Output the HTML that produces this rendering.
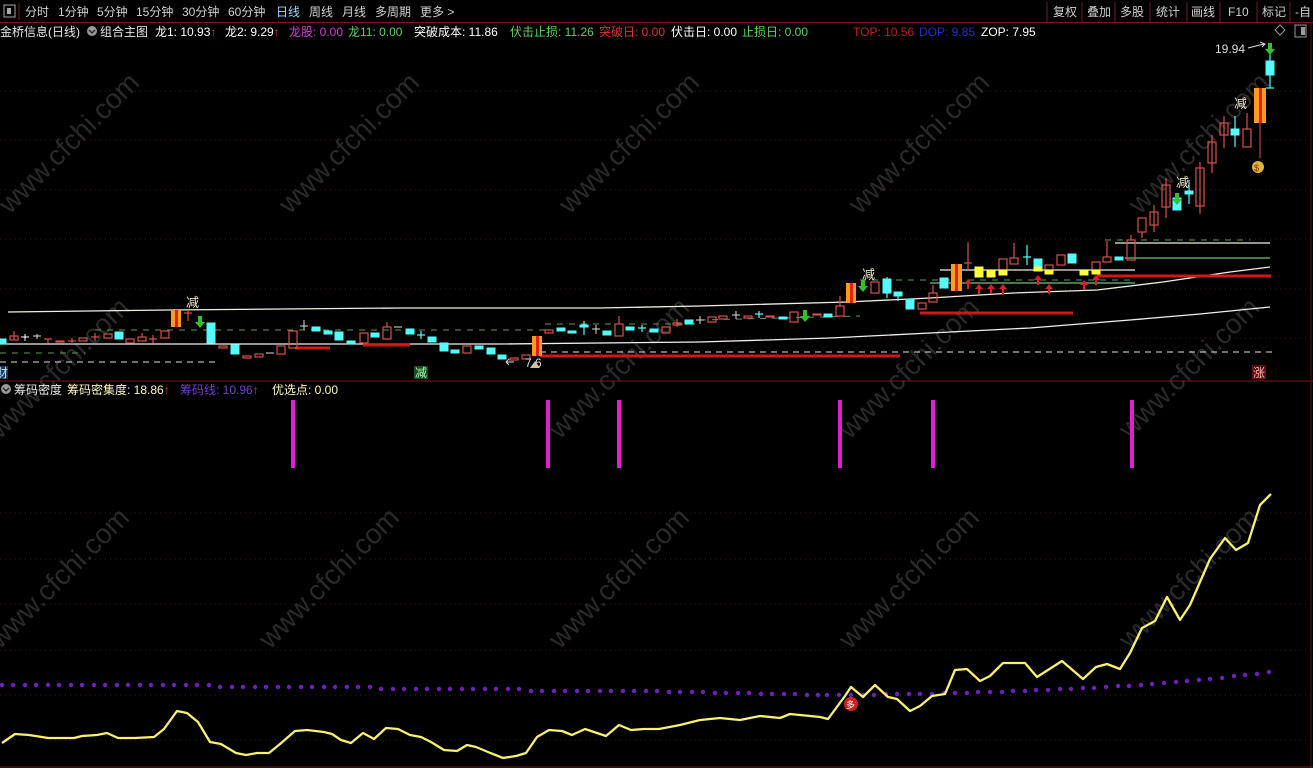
<!DOCTYPE html>
<html><head><meta charset="utf-8"><style>
html,body{margin:0;padding:0;background:#000;width:1313px;height:768px;overflow:hidden}
svg{display:block}
text{font-family:"Liberation Sans","Noto Sans CJK SC",sans-serif;font-size:12px}
.c{fill:#54fcfc;stroke:#54fcfc;stroke-width:1}
.r{fill:none;stroke:#d8504b;stroke-width:1.2}
.y{fill:#ffff40;stroke:#ffff40}
.w{stroke:#d8504b;stroke-width:1.2}
.wc{stroke:#54fcfc;stroke-width:1.2}
.g{stroke:#401818;stroke-width:1;stroke-dasharray:1 4}
</style></head><body>
<svg width="1313" height="768" viewBox="0 0 1313 768" xmlns="http://www.w3.org/2000/svg">
<rect width="1313" height="768" fill="#000"/>
<!-- top bar -->
<line x1="0" y1="22.5" x2="1313" y2="22.5" stroke="#7a1a1a"/>
<rect x="4" y="5" width="11" height="12" fill="none" stroke="#aaa"/><rect x="7" y="8" width="4" height="6" fill="#aaa"/>
<line x1="19" y1="3" x2="19" y2="20" stroke="#7a1a1a"/>
<g fill="#d0d0d0">
<text x="25" y="16">分时</text><text x="58" y="16">1分钟</text><text x="97" y="16">5分钟</text><text x="136" y="16">15分钟</text><text x="182" y="16">30分钟</text><text x="228" y="16">60分钟</text>
<text x="276" y="16" fill="#9fd8ff">日线</text><text x="309" y="16">周线</text><text x="342" y="16">月线</text><text x="375" y="16">多周期</text><text x="420" y="16">更多 &gt;</text>
<text x="1053" y="16">复权</text><text x="1087" y="16">叠加</text><text x="1120" y="16">多股</text><text x="1156" y="16">统计</text><text x="1191" y="16">画线</text><text x="1228" y="16">F10</text><text x="1262" y="16">标记</text><text x="1295" y="16">-自</text>
</g>
<g stroke="#6a2020"><line x1="1047" y1="2" x2="1047" y2="22"/><line x1="1082" y1="2" x2="1082" y2="22"/><line x1="1115" y1="2" x2="1115" y2="22"/><line x1="1150" y1="2" x2="1150" y2="22"/><line x1="1187" y1="2" x2="1187" y2="22"/><line x1="1220" y1="2" x2="1220" y2="22"/><line x1="1257" y1="2" x2="1257" y2="22"/><line x1="1290" y1="2" x2="1290" y2="22"/></g>
<!-- legend -->
<text x="0" y="36" fill="#e8e8e8">金桥信息(日线)</text>
<circle cx="92" cy="31" r="5" fill="#999"/><path d="M89 30l3 3 3-3" stroke="#222" fill="none" stroke-width="1.3"/>
<text x="100" y="36" fill="#e8e8e8">组合主图</text>
<text x="155" y="36" fill="#fff">龙1: 10.93<tspan fill="#e04040">↑</tspan></text>
<text x="225" y="36" fill="#fff">龙2: 9.29<tspan fill="#e04040">↑</tspan></text>
<text x="289" y="36" fill="#d040d0">龙股: 0.00</text>
<text x="348" y="36" fill="#60d060">龙11: 0.00</text>
<text x="414" y="36" fill="#fff">突破成本: 11.86</text>
<text x="510" y="36" fill="#60d060">伏击止损: 11.26</text>
<text x="599" y="36" fill="#e03030">突破日: 0.00</text>
<text x="671" y="36" fill="#fff">伏击日: 0.00</text>
<text x="742" y="36" fill="#60d060">止损日: 0.00</text>
<text x="853" y="36" fill="#c02020">TOP: 10.56</text>
<text x="919" y="36" fill="#2030c0">DOP: 9.85</text>
<text x="981" y="36" fill="#fff">ZOP: 7.95</text>
<path d="M1280 25l5 5-5 5-5-5z" fill="none" stroke="#999"/>
<rect x="1295" y="25" width="11" height="12" fill="none" stroke="#999"/><rect x="1301" y="27" width="4" height="8" fill="#999"/>
<!-- grid top -->
<g class="g"><line x1="0" y1="91" x2="1313" y2="91"/><line x1="0" y1="140" x2="1313" y2="140"/><line x1="0" y1="190" x2="1313" y2="190"/><line x1="0" y1="239" x2="1313" y2="239"/><line x1="0" y1="289" x2="1313" y2="289"/><line x1="0" y1="338" x2="1313" y2="338"/>
<line x1="0" y1="513" x2="1313" y2="513"/><line x1="0" y1="559" x2="1313" y2="559"/><line x1="0" y1="604" x2="1313" y2="604"/><line x1="0" y1="650" x2="1313" y2="650"/><line x1="0" y1="695" x2="1313" y2="695"/><line x1="0" y1="740" x2="1313" y2="740"/></g>
<!-- watermarks -->
<g fill="#2a2a2a" font-size="28"><text transform="translate(10,215) rotate(-45)" style="font-size:28px">www.cfchi.com</text><text transform="translate(290,215) rotate(-45)" style="font-size:28px">www.cfchi.com</text><text transform="translate(570,215) rotate(-45)" style="font-size:28px">www.cfchi.com</text><text transform="translate(860,215) rotate(-45)" style="font-size:28px">www.cfchi.com</text><text transform="translate(1140,215) rotate(-45)" style="font-size:28px">www.cfchi.com</text>
<text transform="translate(0,440) rotate(-45)" style="font-size:28px">www.cfchi.com</text><text transform="translate(560,440) rotate(-45)" style="font-size:28px">www.cfchi.com</text><text transform="translate(850,440) rotate(-45)" style="font-size:28px">www.cfchi.com</text><text transform="translate(1130,440) rotate(-45)" style="font-size:28px">www.cfchi.com</text>
<text transform="translate(0,650) rotate(-45)" style="font-size:28px">www.cfchi.com</text><text transform="translate(270,650) rotate(-45)" style="font-size:28px">www.cfchi.com</text><text transform="translate(560,650) rotate(-45)" style="font-size:28px">www.cfchi.com</text><text transform="translate(850,650) rotate(-45)" style="font-size:28px">www.cfchi.com</text><text transform="translate(1130,650) rotate(-45)" style="font-size:28px">www.cfchi.com</text></g>
<!-- lines -->
<polyline points="8,312 170,310 400,308 600,308 700,306 847,302 930,298 1013,293 1097,290 1163,282 1230,272 1270,267" fill="none" stroke="#f0f0e0" stroke-width="1.3"/>
<polyline points="0,344 500,344 700,342 830,338 930,333 1030,328 1130,320 1200,314 1270,307" fill="none" stroke="#f0f0f0" stroke-width="1.3"/>
<line x1="0" y1="362" x2="215" y2="362" stroke="#e0e0e0" stroke-dasharray="6 5"/>
<line x1="540" y1="352" x2="1275" y2="352" stroke="#e0e0e0" stroke-dasharray="6 5"/>
<g stroke="#5a9a5a" stroke-dasharray="6 6"><line x1="0" y1="353" x2="85" y2="353"/><line x1="95" y1="330" x2="545" y2="330"/><line x1="545" y1="324" x2="700" y2="324"/><line x1="700" y1="320" x2="860" y2="316"/><line x1="860" y1="280" x2="1130" y2="280"/><line x1="1105" y1="240" x2="1250" y2="240"/></g>
<g stroke-width="1.2"><line x1="930" y1="283" x2="1135" y2="283" stroke="#7ac07a"/><line x1="1125" y1="258" x2="1270" y2="258" stroke="#7ac07a"/><line x1="940" y1="270" x2="1135" y2="270" stroke="#f0f0e0"/><line x1="1115" y1="243" x2="1270" y2="243" stroke="#f0f0e0"/></g>
<g stroke="#d01818" stroke-width="3"><line x1="295" y1="348" x2="330" y2="348"/><line x1="363" y1="345" x2="410" y2="345"/><line x1="540" y1="356" x2="900" y2="356"/><line x1="920" y1="313" x2="1073" y2="313"/><line x1="1097" y1="276" x2="1271" y2="276"/></g>
<!-- orange bars -->
<g><rect x="171" y="310" width="10" height="17" fill="#ff9a20"/><rect x="175" y="310" width="3" height="17" fill="#e02020"/>
<rect x="532" y="336" width="10" height="20" fill="#ff9a20"/><rect x="536" y="336" width="3" height="20" fill="#e02020"/>
<rect x="846" y="283" width="10" height="20" fill="#ff9a20"/><rect x="850" y="283" width="3" height="20" fill="#e02020"/>
<rect x="951" y="264" width="11" height="27" fill="#ff9a20"/><rect x="955" y="264" width="3" height="27" fill="#e02020"/>
<rect x="1254" y="88" width="12" height="35" fill="#ff9a20"/><rect x="1259" y="88" width="3" height="35" fill="#e02020"/></g>
<!-- candles left -->
<g>
<rect class="c" x="-2" y="339" width="8" height="5"/>
<line class="w" x1="14" y1="331" x2="14" y2="340"/><rect class="r" x="10" y="336" width="8" height="4"/>
<line x1="21" y1="337" x2="29" y2="337" stroke="#fff"/><line x1="25" y1="334" x2="25" y2="341" stroke="#fff"/>
<line x1="33" y1="336" x2="41" y2="336" stroke="#ddd"/><line x1="37" y1="334" x2="37" y2="339" stroke="#ddd"/>
<line class="w" x1="44" y1="339" x2="52" y2="339"/><line class="w" x1="48" y1="339" x2="48" y2="343"/>
<rect class="r" x="56" y="341" width="8" height="1"/>
<line class="w" x1="68" y1="341" x2="76" y2="341"/><line class="w" x1="72" y1="338" x2="72" y2="344"/>
<rect class="r" x="79" y="338" width="8" height="3"/>
<line class="w" x1="91" y1="337" x2="99" y2="337"/><line class="w" x1="95" y1="333" x2="95" y2="341"/>
<rect class="r" x="104" y="334" width="8" height="4"/>
<rect class="c" x="115" y="332" width="8" height="7"/>
<rect class="r" x="126" y="339" width="8" height="4"/>
<rect class="r" x="138" y="337" width="8" height="4"/><line class="w" x1="142" y1="333" x2="142" y2="337"/>
<line class="w" x1="149" y1="339" x2="157" y2="339"/><line class="w" x1="153" y1="335" x2="153" y2="343"/>
<rect class="r" x="161" y="331" width="8" height="7"/>
<line class="w" x1="184" y1="313" x2="192" y2="313"/><line class="w" x1="188" y1="310" x2="188" y2="321"/>
<rect class="c" x="207" y="323" width="8" height="20"/>
<rect class="r" x="219" y="346" width="8" height="2"/>
<rect class="c" x="231" y="345" width="8" height="9"/>
<rect class="r" x="243" y="356" width="8" height="2"/>
<rect class="r" x="255" y="354" width="8" height="3"/>
<line x1="266" y1="353" x2="274" y2="353" stroke="#ddd"/>
<rect class="r" x="277" y="346" width="8" height="8"/>
<rect class="r" x="289" y="331" width="8" height="17"/>
<line x1="300" y1="326" x2="308" y2="326" stroke="#ddd"/><line x1="304" y1="320" x2="304" y2="330" stroke="#ddd"/>
<rect class="c" x="312" y="327" width="8" height="4"/>
<rect class="c" x="324" y="331" width="8" height="3"/>
<rect class="c" x="335" y="332" width="8" height="8"/>
<rect class="c" x="347" y="341" width="8" height="3"/>
<rect class="r" x="360" y="333" width="8" height="10"/>
<rect class="c" x="371" y="333" width="8" height="4"/>
<rect class="r" x="383" y="327" width="8" height="12"/><line class="w" x1="387" y1="322" x2="387" y2="327"/>
<line x1="394" y1="327" x2="402" y2="327" stroke="#ddd"/>
<rect class="c" x="406" y="329" width="8" height="5"/>
<line class="wc" x1="417" y1="335" x2="425" y2="335"/><line class="wc" x1="421" y1="331" x2="421" y2="339"/>
<rect class="c" x="428" y="337" width="8" height="5"/>
<rect class="c" x="440" y="343" width="8" height="8"/>
<rect class="c" x="451" y="350" width="8" height="3"/>
<rect class="r" x="463" y="346" width="8" height="7"/>
<rect class="c" x="475" y="346" width="8" height="3"/>
<rect class="c" x="487" y="348" width="8" height="6"/>
<rect class="c" x="498" y="355" width="8" height="4"/>
<rect class="r" x="510" y="358" width="8" height="2"/>
<rect class="r" x="522" y="355" width="8" height="4"/>
</g>
<!-- candles middle -->
<g>
<rect class="r" x="545" y="330" width="8" height="3"/>
<rect class="c" x="557" y="328" width="8" height="3"/>
<rect class="c" x="568" y="331" width="8" height="2"/>
<rect class="c" x="580" y="325" width="8" height="2"/><line class="wc" x1="584" y1="321" x2="584" y2="335"/>
<line x1="592" y1="329" x2="600" y2="329" stroke="#ddd"/><line x1="596" y1="325" x2="596" y2="334" stroke="#ddd"/>
<rect class="c" x="603" y="331" width="8" height="4"/>
<rect class="r" x="615" y="324" width="8" height="12"/><line class="w" x1="619" y1="316" x2="619" y2="324"/>
<rect class="c" x="626" y="327" width="8" height="3"/>
<line class="wc" x1="638" y1="328" x2="646" y2="328"/><line class="wc" x1="642" y1="325" x2="642" y2="332"/>
<rect class="c" x="650" y="329" width="8" height="3"/>
<rect class="r" x="662" y="327" width="8" height="6"/>
<rect class="r" x="673" y="323" width="8" height="2"/><line class="w" x1="677" y1="319" x2="677" y2="327"/>
<rect class="c" x="685" y="320" width="8" height="4"/>
<line x1="696" y1="320" x2="704" y2="320" stroke="#ddd"/><line x1="700" y1="316" x2="700" y2="324" stroke="#ddd"/>
<rect class="r" x="708" y="317" width="8" height="5"/>
<rect class="r" x="719" y="316" width="8" height="3"/>
<line x1="732" y1="315" x2="740" y2="315" stroke="#ddd"/><line x1="736" y1="311" x2="736" y2="319" stroke="#ddd"/>
<rect class="r" x="744" y="316" width="8" height="2"/>
<line class="wc" x1="755" y1="314" x2="763" y2="314"/><line class="wc" x1="759" y1="311" x2="759" y2="318"/>
<rect class="r" x="766" y="316" width="8" height="1"/>
<rect class="c" x="779" y="317" width="8" height="2"/>
<rect class="r" x="790" y="312" width="8" height="10"/>
<rect class="r" x="813" y="314" width="8" height="1"/>
<rect class="c" x="824" y="314" width="8" height="3"/>
<rect class="r" x="836" y="306" width="8" height="10"/><line class="w" x1="840" y1="296" x2="840" y2="306"/>
</g>
<!-- candles right -->
<g>
<rect class="r" x="871" y="282" width="8" height="11"/>
<rect class="c" x="883" y="279" width="8" height="14"/><line class="wc" x1="887" y1="277" x2="887" y2="298"/>
<rect class="c" x="894" y="292" width="8" height="4"/><line class="wc" x1="898" y1="296" x2="898" y2="301"/>
<rect class="c" x="906" y="299" width="8" height="10"/>
<rect class="r" x="918" y="303" width="8" height="6"/>
<rect class="r" x="929" y="293" width="8" height="9"/><line class="w" x1="933" y1="285" x2="933" y2="293"/>
<rect class="c" x="940" y="278" width="8" height="10"/>
<line class="w" x1="964" y1="263" x2="972" y2="263"/><line class="w" x1="968" y1="242" x2="968" y2="270"/>
<rect class="y" x="975" y="267" width="8" height="10"/>
<rect class="y" x="987" y="270" width="8" height="7"/>
<rect class="r" x="999" y="259" width="8" height="11"/><rect class="y" x="999" y="270" width="8" height="5"/>
<rect class="r" x="1010" y="258" width="8" height="6"/><line class="w" x1="1014" y1="243" x2="1014" y2="258"/>
<line class="wc" x1="1023" y1="257" x2="1031" y2="257"/><line class="wc" x1="1027" y1="245" x2="1027" y2="265"/>
<rect class="c" x="1034" y="259" width="8" height="8"/><rect class="y" x="1034" y="267" width="8" height="4"/>
<rect class="r" x="1045" y="265" width="8" height="5"/><rect class="y" x="1045" y="270" width="8" height="4"/>
<rect class="r" x="1057" y="255" width="8" height="10"/>
<rect class="c" x="1068" y="254" width="8" height="9"/>
<rect class="y" x="1080" y="270" width="8" height="5"/>
<rect class="r" x="1092" y="262" width="8" height="8"/><rect class="y" x="1092" y="270" width="8" height="4"/>
<rect class="r" x="1103" y="257" width="8" height="5"/><line class="w" x1="1107" y1="241" x2="1107" y2="257"/>
<rect class="c" x="1115" y="257" width="8" height="3"/>
<rect class="r" x="1127" y="240" width="8" height="20"/><line class="w" x1="1131" y1="235" x2="1131" y2="240"/>
<rect class="r" x="1138" y="218" width="8" height="14"/><line class="w" x1="1142" y1="232" x2="1142" y2="238"/>
<rect class="r" x="1150" y="212" width="8" height="13"/><line class="w" x1="1154" y1="205" x2="1154" y2="232"/>
<rect class="r" x="1162" y="185" width="8" height="22"/><line class="w" x1="1166" y1="178" x2="1166" y2="218"/>
<rect class="c" x="1173" y="198" width="8" height="12"/>
<rect class="c" x="1185" y="191" width="8" height="3"/><line class="wc" x1="1189" y1="180" x2="1189" y2="204"/>
<rect class="r" x="1196" y="168" width="8" height="38"/><line class="w" x1="1200" y1="162" x2="1200" y2="214"/>
<rect class="r" x="1208" y="142" width="8" height="21"/><line class="w" x1="1212" y1="135" x2="1212" y2="173"/>
<rect class="r" x="1220" y="123" width="8" height="12"/><line class="w" x1="1224" y1="116" x2="1224" y2="148"/>
<rect class="c" x="1231" y="129" width="8" height="6"/><line class="wc" x1="1235" y1="116" x2="1235" y2="147"/>
<rect class="r" x="1243" y="129" width="8" height="18"/><line class="w" x1="1247" y1="113" x2="1247" y2="129"/>
<line x1="1260" y1="123" x2="1260" y2="158" stroke="#d8504b"/>
<rect class="c" x="1266" y="61" width="8" height="14"/><line class="wc" x1="1270" y1="45" x2="1270" y2="88"/><line class="wc" x1="1266" y1="88" x2="1274" y2="88"/>
</g>
<!-- arrows -->
<g fill="#e02020">
<path d="M968 279l-4 5h3v5h2v-5h3z"/><path d="M979 284l-4 5h3v5h2v-5h3z"/><path d="M991 284l-4 5h3v5h2v-5h3z"/><path d="M1003 284l-4 5h3v5h2v-5h3z"/><path d="M1038 275l-4 5h3v5h2v-5h3z"/><path d="M1049 284l-4 5h3v5h2v-5h3z"/><path d="M1084 280l-4 5h3v5h2v-5h3z"/><path d="M1096 275l-4 5h3v5h2v-5h3z"/>
</g>
<g fill="#30c030">
<path d="M200 328l-5-6h3v-6h4v6h3z"/><path d="M805 322l-5-6h3v-6h4v6h3z"/><path d="M863 292l-5-6h3v-6h4v6h3z"/><path d="M1177 205l-5-6h3v-6h4v6h3z"/><path d="M1270 55l-5-6h3v-6h4v6h3z"/>
</g>
<g fill="#f0e8d0" style="font-size:13px"><text x="186" y="307" style="font-size:13px">减</text><text x="862" y="279" style="font-size:13px">减</text><text x="1176" y="187" style="font-size:13px">减</text><text x="1234" y="108" style="font-size:13px">减</text></g>
<text x="1215" y="53" fill="#ddd">19.94</text><path d="M1248 48l16-4m-4-2l5 2-3 3" stroke="#ddd" fill="none"/>
<circle cx="1258" cy="167" r="6" fill="#e0b040"/><text x="1254" y="171" fill="#803000" style="font-size:9px">$</text>
<path d="M514 362h-8m3-3l-3 3 3 3" stroke="#ddd" fill="none"/><text x="525" y="367" fill="#ddd">7.6</text><path d="M530 368l5-7 5 7z" fill="#d0c0a0"/>
<rect x="414" y="366" width="14" height="13" fill="#1a4a2a"/><text x="415" y="377" fill="#a0ffa0">减</text>
<rect x="0" y="366" width="8" height="13" fill="#1a3a5a"/><text x="-4" y="377" fill="#c0e0ff">财</text>
<rect x="1252" y="365" width="14" height="14" fill="#5a1010"/><text x="1253" y="377" fill="#ffb0b0">涨</text>
<!-- separator -->
<line x1="0" y1="381" x2="1313" y2="381" stroke="#7a1a1a"/>
<line x1="1311" y1="22" x2="1311" y2="768" stroke="#5a1010"/>
<!-- lower legend -->
<circle cx="6" cy="389" r="5" fill="#999"/><path d="M3 388l3 3 3-3" stroke="#222" fill="none" stroke-width="1.3"/>
<text x="14" y="394" fill="#e8e8e8">筹码密度</text>
<text x="67" y="394" fill="#fff8c0">筹码密集度: 18.86<tspan fill="#e04040">↑</tspan></text>
<text x="180" y="394" fill="#7040d0">筹码线: 10.96<tspan fill="#e04040">↑</tspan></text>
<text x="272" y="394" fill="#fff8c0">优选点: 0.00</text>
<!-- magenta bars -->
<g fill="#e020d0"><rect x="291" y="400" width="4" height="68"/><rect x="546" y="400" width="4" height="68"/><rect x="617" y="400" width="4" height="68"/><rect x="838" y="400" width="4" height="68"/><rect x="931" y="400" width="4" height="68"/><rect x="1130" y="400" width="4" height="68"/></g>
<!-- purple dots -->
<g fill="#7020c0">
<circle cx="2" cy="685" r="2.2"/><circle cx="13" cy="685" r="2.2"/><circle cx="25" cy="685" r="2.2"/><circle cx="36" cy="685" r="2.2"/><circle cx="48" cy="685" r="2.2"/><circle cx="59" cy="685" r="2.2"/><circle cx="71" cy="685" r="2.2"/><circle cx="82" cy="685" r="2.2"/><circle cx="94" cy="685" r="2.2"/><circle cx="105" cy="685" r="2.2"/><circle cx="117" cy="685" r="2.2"/><circle cx="128" cy="685" r="2.2"/><circle cx="140" cy="685" r="2.2"/><circle cx="151" cy="685" r="2.2"/><circle cx="163" cy="685" r="2.2"/><circle cx="174" cy="685" r="2.2"/><circle cx="186" cy="685" r="2.2"/><circle cx="197" cy="685" r="2.2"/><circle cx="209" cy="685" r="2.2"/>
<circle cx="220" cy="687" r="2.2"/><circle cx="232" cy="687" r="2.2"/><circle cx="243" cy="687" r="2.2"/><circle cx="255" cy="687" r="2.2"/><circle cx="266" cy="687" r="2.2"/><circle cx="278" cy="687" r="2.2"/><circle cx="289" cy="687" r="2.2"/><circle cx="301" cy="687" r="2.2"/><circle cx="312" cy="687" r="2.2"/><circle cx="324" cy="687" r="2.2"/><circle cx="335" cy="687" r="2.2"/><circle cx="347" cy="687" r="2.2"/><circle cx="358" cy="687" r="2.2"/><circle cx="370" cy="687" r="2.2"/>
<circle cx="381" cy="689" r="2.2"/><circle cx="393" cy="689" r="2.2"/><circle cx="404" cy="689" r="2.2"/><circle cx="416" cy="689" r="2.2"/><circle cx="427" cy="689" r="2.2"/><circle cx="439" cy="689" r="2.2"/><circle cx="450" cy="689" r="2.2"/><circle cx="462" cy="689" r="2.2"/><circle cx="473" cy="689" r="2.2"/><circle cx="485" cy="689" r="2.2"/><circle cx="496" cy="689" r="2.2"/><circle cx="508" cy="689" r="2.2"/><circle cx="519" cy="689" r="2.2"/>
<circle cx="531" cy="691" r="2.2"/><circle cx="542" cy="691" r="2.2"/><circle cx="554" cy="691" r="2.2"/><circle cx="565" cy="691" r="2.2"/><circle cx="577" cy="691" r="2.2"/><circle cx="588" cy="691" r="2.2"/><circle cx="600" cy="691" r="2.2"/><circle cx="611" cy="691" r="2.2"/><circle cx="623" cy="691" r="2.2"/><circle cx="634" cy="691" r="2.2"/><circle cx="646" cy="691" r="2.2"/><circle cx="657" cy="691" r="2.2"/><circle cx="669" cy="692" r="2.2"/><circle cx="680" cy="692" r="2.2"/><circle cx="692" cy="692" r="2.2"/><circle cx="703" cy="692" r="2.2"/><circle cx="715" cy="693" r="2.2"/><circle cx="726" cy="693" r="2.2"/><circle cx="738" cy="693" r="2.2"/><circle cx="749" cy="693" r="2.2"/><circle cx="761" cy="694" r="2.2"/><circle cx="772" cy="694" r="2.2"/><circle cx="784" cy="694" r="2.2"/><circle cx="795" cy="694" r="2.2"/><circle cx="807" cy="695" r="2.2"/><circle cx="818" cy="695" r="2.2"/>
<circle cx="827" cy="695" r="2.2"/><circle cx="839" cy="695" r="2.2"/><circle cx="851" cy="695" r="2.2"/><circle cx="863" cy="695" r="2.2"/><circle cx="874" cy="695" r="2.2"/><circle cx="886" cy="694" r="2.2"/><circle cx="897" cy="694" r="2.2"/><circle cx="909" cy="694" r="2.2"/><circle cx="920" cy="694" r="2.2"/><circle cx="932" cy="694" r="2.2"/><circle cx="944" cy="693" r="2.2"/><circle cx="955" cy="693" r="2.2"/><circle cx="967" cy="693" r="2.2"/><circle cx="978" cy="692" r="2.2"/><circle cx="990" cy="692" r="2.2"/><circle cx="1002" cy="692" r="2.2"/><circle cx="1013" cy="691" r="2.2"/><circle cx="1025" cy="691" r="2.2"/><circle cx="1036" cy="690" r="2.2"/><circle cx="1048" cy="690" r="2.2"/><circle cx="1060" cy="689" r="2.2"/><circle cx="1071" cy="689" r="2.2"/><circle cx="1083" cy="688" r="2.2"/><circle cx="1094" cy="688" r="2.2"/><circle cx="1106" cy="687" r="2.2"/><circle cx="1118" cy="686" r="2.2"/><circle cx="1129" cy="686" r="2.2"/><circle cx="1141" cy="685" r="2.2"/><circle cx="1152" cy="684" r="2.2"/><circle cx="1164" cy="683" r="2.2"/><circle cx="1176" cy="682" r="2.2"/><circle cx="1187" cy="681" r="2.2"/><circle cx="1199" cy="680" r="2.2"/><circle cx="1210" cy="679" r="2.2"/><circle cx="1222" cy="678" r="2.2"/><circle cx="1234" cy="676" r="2.2"/><circle cx="1245" cy="675" r="2.2"/><circle cx="1257" cy="674" r="2.2"/><circle cx="1269" cy="672" r="2.2"/>
</g>
<!-- yellow line -->
<polyline fill="none" stroke="#f8f070" stroke-width="2.3" stroke-linejoin="round" points="2,743 15,734 29,735 42,737 48,738 74,738 82,736 97,735 107,733 118,738 135,738 154,737 164,729 177,711 187,713 198,722 210,742 221,744 236,753 246,755 257,753 269,753 280,744 295,731 307,730 324,732 332,734 341,740 351,743 363,733 374,739 386,728 398,729 410,735 421,737 431,742 444,750 457,751 467,745 476,747 488,752 503,758 516,756 526,753 537,737 549,730 562,731 572,735 585,729 606,736 619,725 631,730 644,729 659,729 680,725 700,720 720,718 740,720 760,716 780,718 790,714 810,716 820,717 828,719 845,696 851,687 863,697 875,685 888,697 897,699 910,711 920,706 932,696 945,694 955,670 967,669 980,681 990,676 1003,663 1025,663 1037,677 1062,661 1083,679 1096,667 1107,664 1120,669 1130,653 1142,628 1155,621 1167,597 1180,620 1190,605 1210,559 1225,538 1236,550 1248,543 1260,505 1271,494"/>
<circle cx="851" cy="704" r="7" fill="#d02020"/><text x="846" y="708" fill="#fff" style="font-size:9px">多</text>
<line x1="0" y1="767" x2="1313" y2="767" stroke="#7a1a1a"/>
</svg>
</body></html>
